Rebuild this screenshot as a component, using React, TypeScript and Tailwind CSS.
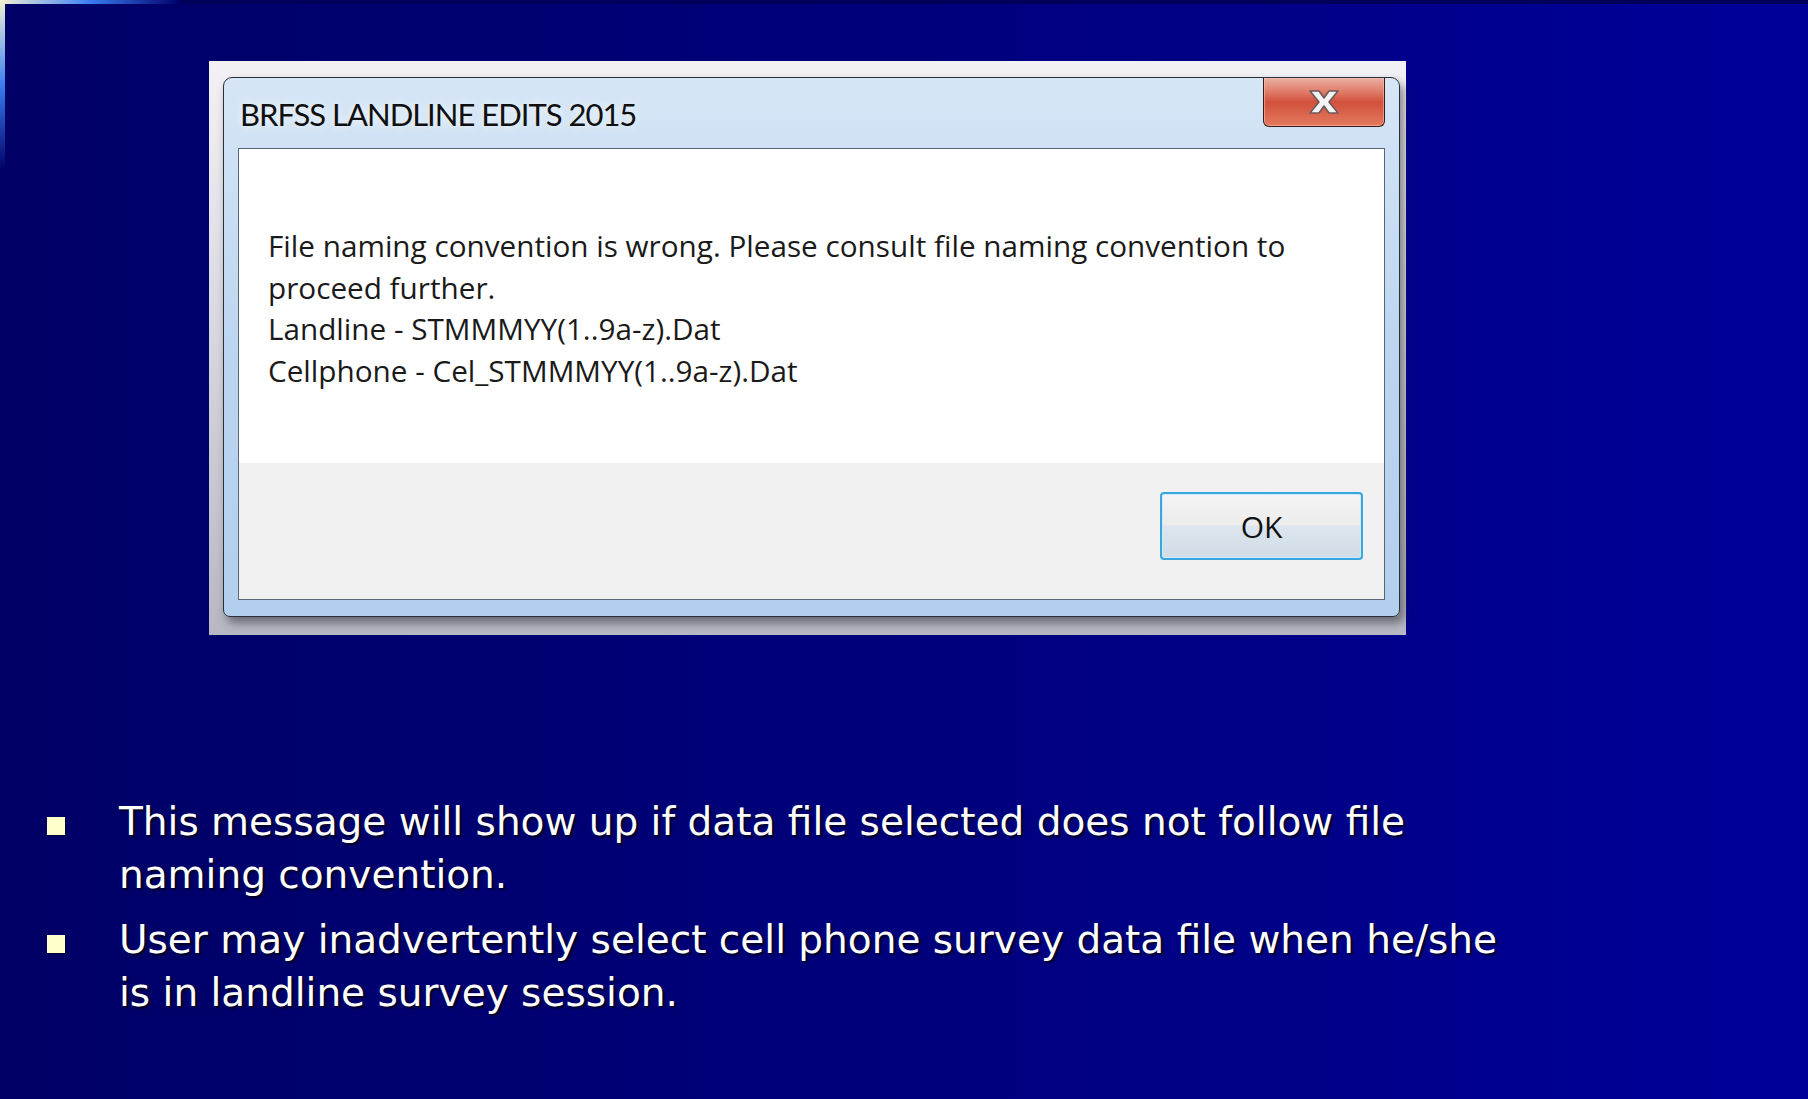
import React from "react";

const titleFont = { fontFamily: "Lato, 'Noto Sans', sans-serif" };
const msgFont = { fontFamily: "'Open Sans', 'Noto Sans', sans-serif" };
const slideFont = { fontFamily: "'DejaVu Sans', Verdana, sans-serif" };

const bullets = [
  [
    "This message will show up if data file selected does not follow file",
    "naming convention.",
  ],
  [
    "User may inadvertently select cell phone survey data file when he/she",
    "is in landline survey session.",
  ],
];

const CloseGlyph = () => (
  <svg width="34" height="26" viewBox="0 0 34 26">
    <path
      d="M3 2 H12 L17 9 L22 2 H31 L22 13 L31 24 H22 L17 17 L12 24 H3 L12 13 Z"
      fill="#f4f4f4"
      stroke="#6b5a5a"
      strokeWidth="1.6"
      strokeLinejoin="round"
    />
  </svg>
);

const App = () => {
  return (
    <div className="relative w-[1808px] h-[1099px] overflow-hidden bg-gradient-to-r from-[#000066] via-[#00007c] to-[#000099]">
      {/* slide edge highlights */}
      <div className="absolute left-0 top-0 h-[4px] w-[180px] bg-gradient-to-r from-[#f4f0d0] via-[#3a7cf0] to-transparent" />
      <div className="absolute left-0 top-0 w-[5px] h-[170px] bg-gradient-to-b from-[#f4f0d0] via-[#3a7cf0] to-transparent" />
      <div className="absolute left-[180px] right-0 top-0 h-[4px] bg-[#00005a]" />

      <div className="pt-[61px] pl-[209px]">
        {/* captured screenshot frame */}
        <div className="w-[1197px] h-[574px] pt-[16px] pl-[14px] bg-gradient-to-b from-[#f2f2f6] via-[#d6d6de] to-[#b8b8c4]">
          <div className="w-[1177px] h-[540px] flex flex-col rounded-t-[9px] rounded-b-[7px] border border-[#2b3038] bg-gradient-to-b from-[#d6e6f6] via-[#bcd5f0] to-[#b2cfee] shadow-[4px_6px_10px_rgba(40,40,50,0.55)]">
            <div className="h-[70px] flex items-start justify-between pl-[16px] pr-[14px]">
              <div
                className="pt-[16px] text-[31px] leading-[40px] tracking-[-1px] text-[#101010] [text-shadow:0_0_10px_#ffffff]"
                style={titleFont}
              >
                BRFSS LANDLINE EDITS 2015
              </div>
              <div className="w-[122px] h-[49px] flex items-center justify-center rounded-b-[6px] border border-t-0 border-[#3a1a14] bg-gradient-to-b from-[#eab0a4] via-[#d2503c] to-[#e27a5e] shadow-[inset_0_0_0_1px_rgba(255,200,190,0.5)]">
                <CloseGlyph />
              </div>
            </div>
            <div className="mx-[14px] mb-[16px] flex-1 flex flex-col border border-[#5b6674]" style={msgFont}>
              <div className="h-[314px] bg-white pl-[29px] pt-[76px] text-[29.7px] leading-[41.5px] text-[#1a1a1a]">
                <div>File naming convention is wrong. Please consult file naming convention to</div>
                <div>proceed further.</div>
                <div>Landline - STMMMYY(1..9a-z).Dat</div>
                <div>Cellphone - Cel_STMMMYY(1..9a-z).Dat</div>
              </div>
              <div className="flex-1 bg-[#f0f0f0] flex justify-end items-start pt-[29px] pr-[21px]">
                <button className="w-[203px] h-[68px] rounded-[4px] border-2 border-[#3aa6dc] bg-[linear-gradient(to_bottom,#f4f4f4_0%,#ececec_48%,#dde6ee_50%,#cfdbe6_100%)] shadow-[inset_0_0_0_1px_#c8ecfa] text-[30px] text-[#111]">
                  OK
                </button>
              </div>
            </div>
          </div>
        </div>
      </div>

      <div className="mt-[160px] flex flex-col gap-[12px] text-white" style={slideFont}>
        {bullets.map((lines, i) => (
          <div key={i} className="flex items-start">
            <div className="w-[119px] pl-[47px] pt-[22px]">
              <div className="w-[18px] h-[18px] bg-[#ffffcc] shadow-[1px_1px_1px_#000033]" />
            </div>
            <div className="text-[39px] leading-[53px] [text-shadow:2px_2px_2px_#000022]">
              {lines.map((l) => (
                <div key={l}>{l}</div>
              ))}
            </div>
          </div>
        ))}
      </div>
    </div>
  );
};

export default App;
